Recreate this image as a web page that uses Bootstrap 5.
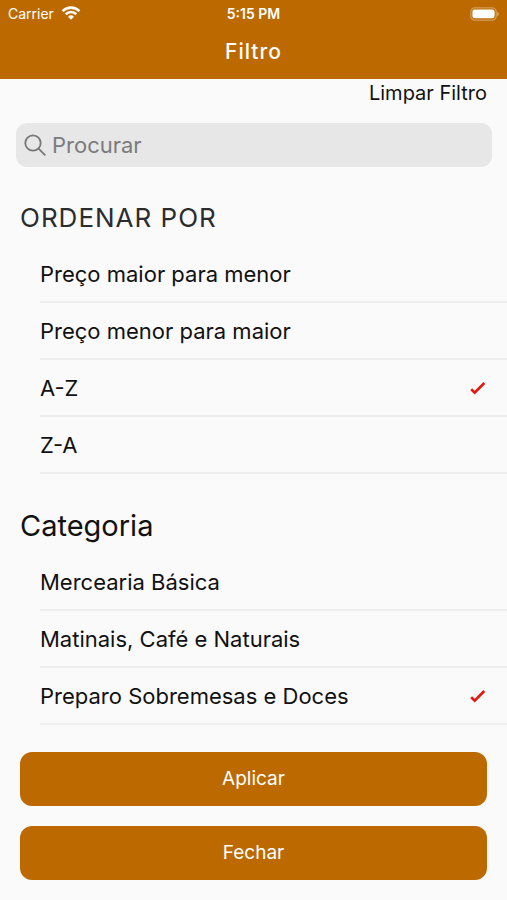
<!DOCTYPE html>
<html lang="pt-BR">
<head>
<meta charset="utf-8">
<meta name="viewport" content="width=device-width, initial-scale=1">
<title>Filtro</title>
<link rel="stylesheet" href="https://cdn.jsdelivr.net/npm/bootstrap@5.3.0/dist/css/bootstrap.min.css">
<style>
  :root { --brand: #bc6a00; --page: #fafafa; --line: #eeeeee; }
  body { background: var(--page); color: #111; font-family: Inter, "Open Sans", sans-serif; font-size: 22px; line-height: 28px; }
  .app-header { background: var(--brand); color: #fff; padding-bottom: 13px; }
  .status-bar { height: 28px; padding: 0 8px; font-size: 14px; line-height: 28px; }
  .status-side { flex: 1 1 0; gap: 7px; }
  .status-time { font-weight: 600; }
  .app-title { font-size: 21px; line-height: 28px; font-weight: 500; letter-spacing: 1px; padding-top: 10px; }
  .clear-link { color: #111; font-size: 20px; padding-right: 20px; }
  .search-box { margin: 16px 15px 0 16px; height: 44px; padding: 0 8px; gap: 6px; border-radius: 11px; background: #e7e7e7; }
  .search-box .form-control { color: #333; font-size: 22px; }
  .search-box .form-control::placeholder { color: #7b7b7d; opacity: 1; }
  .filter-group { margin-top: 33px; }
  .filter-group + .filter-group { margin-top: 34px; }
  .group-title { font-size: 29px; line-height: 36px; font-weight: 400; margin: 0 20px 10px; }
  .upper-title { color: #2c2c2e; font-size: 26px; letter-spacing: 1px; }
  .option-row { min-height: 57px; margin-left: 40px; padding-right: 20px; border-bottom: 2px solid var(--line); cursor: pointer; }
  .option-row .form-check-input { width: 18px; height: 18px; margin: 0; border: 0; border-radius: 0; background-color: transparent; background-position: center; background-size: 18px 18px; }
  .option-row .form-check-input:checked { background-image: url("data:image/svg+xml,%3Csvg xmlns='http://www.w3.org/2000/svg' viewBox='0 0 18 18'%3E%3Cpath d='M2.2 10.2 5.7 13.6 15.3 4' fill='none' stroke='%23e3170d' stroke-width='2.6'/%3E%3C/svg%3E"); }
  .actions { margin: 27px 20px 20px; gap: 20px; }
  .btn-brand { --bs-btn-color: #fff; --bs-btn-bg: var(--brand); --bs-btn-hover-color: #fff; --bs-btn-hover-bg: #a55d00; --bs-btn-active-color: #fff; --bs-btn-active-bg: #955400; min-height: 54px; border: 0; border-radius: 12px; font-size: 19px; }
</style>
</head>
<body>
<header class="app-header">
  <div class="status-bar d-flex align-items-center">
    <div class="status-side d-flex align-items-center">
      <span>Carrier</span>
      <svg width="20" height="16" viewBox="0 0 20 16" fill="none" stroke="#fff" stroke-width="2.6" aria-hidden="true">
        <path d="M1.6 5.1a12 12 0 0 1 16.8 0M4.7 8.2a7.6 7.6 0 0 1 10.6 0"/>
        <path d="M10 13.7 7 10.7a4.3 4.3 0 0 1 6 0z" fill="#fff" stroke="none"/>
      </svg>
    </div>
    <span class="status-time">5:15 PM</span>
    <div class="status-side d-flex align-items-center justify-content-end">
      <svg width="29" height="14" viewBox="0 0 29 14" aria-hidden="true">
        <rect x=".8" y=".8" width="25.4" height="12.4" rx="4" fill="none" stroke="#fff" stroke-opacity=".35" stroke-width="1.2"/>
        <rect x="2.4" y="2.4" width="22.2" height="8.8" rx="2.3" fill="#fff"/>
        <path d="M27.2 4.8q1.6.7 1.6 2.2t-1.6 2.2z" fill="#fff" fill-opacity=".4"/>
      </svg>
    </div>
  </div>
  <h1 class="app-title text-center m-0">Filtro</h1>
</header>

<main>
  <div class="d-flex justify-content-end">
    <a href="#" class="clear-link text-decoration-none">Limpar Filtro</a>
  </div>

  <label class="search-box d-flex align-items-center">
    <svg class="flex-shrink-0" width="22" height="22" viewBox="0 0 22 22" fill="none" stroke="#77777a" stroke-width="1.8" stroke-linecap="round" aria-hidden="true">
      <circle cx="9" cy="9" r="7.7"/>
      <path d="m14.6 14.6 6.2 6.2"/>
    </svg>
    <input type="search" class="form-control border-0 bg-transparent shadow-none p-0" placeholder="Procurar" aria-label="Procurar">
  </label>

  <form>
    <section class="filter-group" role="radiogroup" aria-labelledby="sort-title">
      <h2 class="group-title upper-title" id="sort-title">ORDENAR POR</h2>
      <label class="option-row d-flex align-items-center justify-content-between">Preço maior para menor<input class="form-check-input" type="radio" name="sort"></label>
      <label class="option-row d-flex align-items-center justify-content-between">Preço menor para maior<input class="form-check-input" type="radio" name="sort"></label>
      <label class="option-row d-flex align-items-center justify-content-between">A-Z<input class="form-check-input" type="radio" name="sort" checked></label>
      <label class="option-row d-flex align-items-center justify-content-between">Z-A<input class="form-check-input" type="radio" name="sort"></label>
    </section>

    <section class="filter-group" role="group" aria-labelledby="category-title">
      <h2 class="group-title" id="category-title">Categoria</h2>
      <label class="option-row d-flex align-items-center justify-content-between">Mercearia Básica<input class="form-check-input" type="checkbox" name="category"></label>
      <label class="option-row d-flex align-items-center justify-content-between">Matinais, Café e Naturais<input class="form-check-input" type="checkbox" name="category"></label>
      <label class="option-row d-flex align-items-center justify-content-between">Preparo Sobremesas e Doces<input class="form-check-input" type="checkbox" name="category" checked></label>
    </section>

    <div class="actions d-grid">
      <button type="button" class="btn btn-brand">Aplicar</button>
      <button type="button" class="btn btn-brand">Fechar</button>
    </div>
  </form>
</main>
<script src="https://cdn.jsdelivr.net/npm/bootstrap@5.3.0/dist/js/bootstrap.bundle.min.js"></script>
</body>
</html>
